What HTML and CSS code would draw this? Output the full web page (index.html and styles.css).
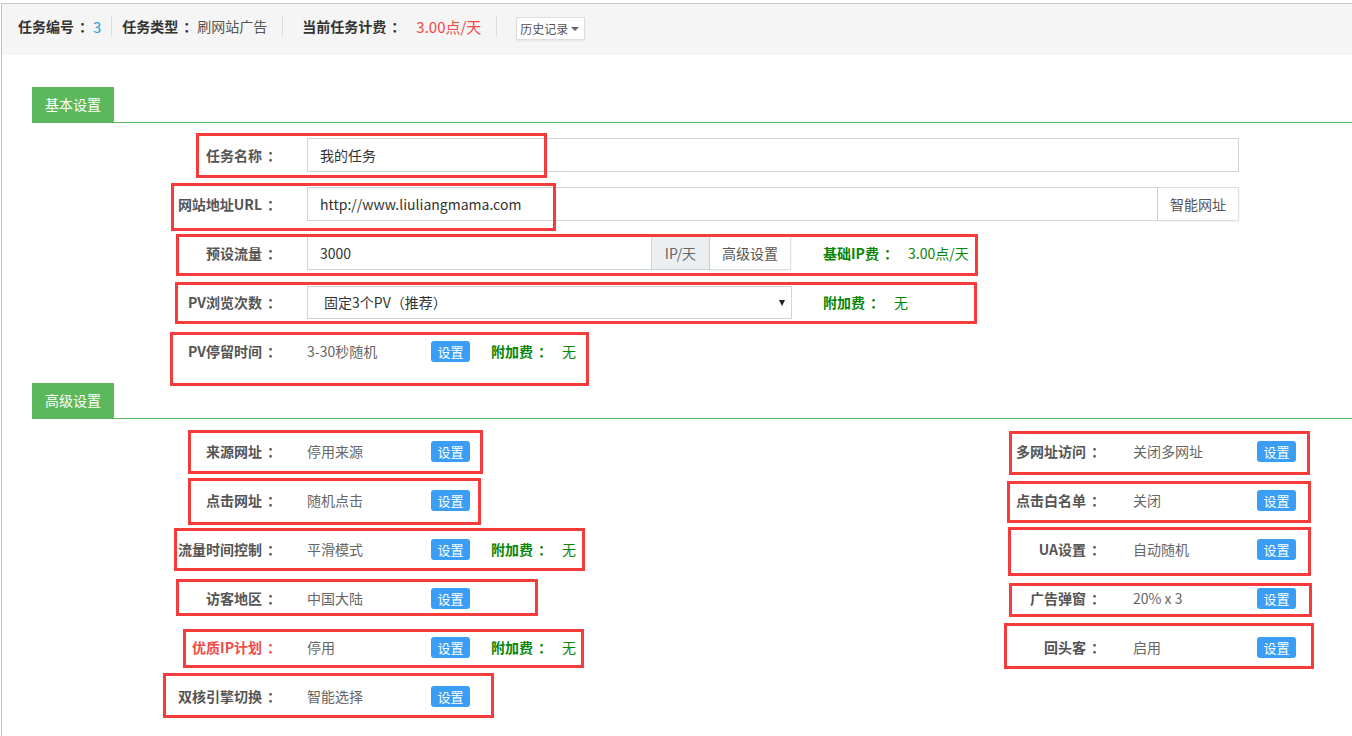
FILE: index.html
```html
<!DOCTYPE html>
<html lang="zh-CN">
<head>
<meta charset="utf-8">
<title>任务设置</title>
<link rel="stylesheet" href="styles.css">
</head>
<body>
<div class="page">
  <div class="topbar">
    <span class="tb-label">任务编号<span class="colon">：</span></span><span class="tb-id">3</span>
    <span class="tb-sep sep1"></span>
    <span class="tb-label">任务类型<span class="colon">：</span></span><span class="tb-text">刷网站广告</span>
    <span class="tb-sep sep2"></span>
    <span class="tb-label">当前任务计费<span class="colon">：</span></span><span class="tb-fee">3.00点/天</span>
    <span class="tb-sep sep3"></span>
    <span class="tb-history">历史记录<span class="caret"></span></span>
  </div>

  <div class="content">
    <div class="section-head"><span class="section-tab">基本设置</span></div>

    <div class="row">
      <div class="label">任务名称<span class="colon">：</span></div>
      <div class="field">
        <div class="input w-name">我的任务</div>
      </div>
    </div>

    <div class="row">
      <div class="label">网站地址URL<span class="colon">：</span></div>
      <div class="field">
        <div class="input w-url">http://www.liuliangmama.com</div>
        <div class="addon-btn">智能网址</div>
      </div>
    </div>

    <div class="row">
      <div class="label">预设流量<span class="colon">：</span></div>
      <div class="field">
        <div class="input w-flow">3000</div>
        <div class="addon-gray">IP/天</div>
        <div class="addon-btn">高级设置</div>
        <div class="extra extra-wide"><span class="extra-label">基础IP费<span class="colon">：</span></span><span class="extra-val">3.00点/天</span></div>
      </div>
    </div>

    <div class="row">
      <div class="label">PV浏览次数<span class="colon">：</span></div>
      <div class="field">
        <div class="select">固定3个PV（推荐）<span class="select-arrow"></span></div>
        <div class="extra extra-sel"><span class="extra-label">附加费<span class="colon">：</span></span><span class="extra-val">无</span></div>
      </div>
    </div>

    <div class="row">
      <div class="label">PV停留时间<span class="colon">：</span></div>
      <div class="field">
        <div class="value">3-30秒随机</div>
        <div class="btn-set">设置</div>
        <div class="extra"><span class="extra-label">附加费<span class="colon">：</span></span><span class="extra-val">无</span></div>
      </div>
    </div>

    <div class="section-head"><span class="section-tab">高级设置</span></div>

    <div class="adv">
      <div class="adv-left">
        <div class="row">
          <div class="label">来源网址<span class="colon">：</span></div>
          <div class="field"><div class="value">停用来源</div><div class="btn-set">设置</div></div>
        </div>
        <div class="row">
          <div class="label">点击网址<span class="colon">：</span></div>
          <div class="field"><div class="value">随机点击</div><div class="btn-set">设置</div></div>
        </div>
        <div class="row">
          <div class="label">流量时间控制<span class="colon">：</span></div>
          <div class="field"><div class="value">平滑模式</div><div class="btn-set">设置</div>
            <div class="extra"><span class="extra-label">附加费<span class="colon">：</span></span><span class="extra-val">无</span></div></div>
        </div>
        <div class="row">
          <div class="label">访客地区<span class="colon">：</span></div>
          <div class="field"><div class="value">中国大陆</div><div class="btn-set">设置</div></div>
        </div>
        <div class="row">
          <div class="label label-red">优质IP计划<span class="colon">：</span></div>
          <div class="field"><div class="value">停用</div><div class="btn-set">设置</div>
            <div class="extra"><span class="extra-label">附加费<span class="colon">：</span></span><span class="extra-val">无</span></div></div>
        </div>
        <div class="row">
          <div class="label">双核引擎切换<span class="colon">：</span></div>
          <div class="field"><div class="value">智能选择</div><div class="btn-set">设置</div></div>
        </div>
      </div>
      <div class="adv-right">
        <div class="row">
          <div class="label label-r">多网址访问<span class="colon">：</span></div>
          <div class="field field-r"><div class="value">关闭多网址</div><div class="btn-set">设置</div></div>
        </div>
        <div class="row">
          <div class="label label-r">点击白名单<span class="colon">：</span></div>
          <div class="field field-r"><div class="value">关闭</div><div class="btn-set">设置</div></div>
        </div>
        <div class="row">
          <div class="label label-r">UA设置<span class="colon">：</span></div>
          <div class="field field-r"><div class="value">自动随机</div><div class="btn-set">设置</div></div>
        </div>
        <div class="row">
          <div class="label label-r">广告弹窗<span class="colon">：</span></div>
          <div class="field field-r"><div class="value">20% x 3</div><div class="btn-set">设置</div></div>
        </div>
        <div class="row">
          <div class="label label-r">回头客<span class="colon">：</span></div>
          <div class="field field-r"><div class="value">启用</div><div class="btn-set">设置</div></div>
        </div>
      </div>
    </div>
  </div>
</div>

<div class="annot a1"></div>
<div class="annot a2"></div>
<div class="annot a3"></div>
<div class="annot a4"></div>
<div class="annot a5"></div>
<div class="annot a6"></div>
<div class="annot a7"></div>
<div class="annot a8"></div>
<div class="annot a9"></div>
<div class="annot a10"></div>
<div class="annot a11"></div>
<div class="annot a12"></div>
<div class="annot a13"></div>
<div class="annot a14"></div>
<div class="annot a15"></div>
<div class="annot a16"></div>
</body>
</html>
```

FILE: styles.css
```css
* { box-sizing: border-box; }
html, body { margin: 0; padding: 0; background: #fff; }
body {
  position: relative;
  height: 736px;
  overflow: hidden;
  font-family: "Noto Sans CJK SC", "Noto Sans", sans-serif;
  font-size: 14px;
  color: #333;
}

/* full-width colon sits centred in its cell in the reference */
.colon { padding-left: 5px; margin-right: -5px; }

.page {
  margin: 3px 0 0 1px;
  border-top: 1px solid #c8c8c8;
  border-left: 1px solid #c4c4c4;
  min-height: 733px;
}

/* ---------- top bar ---------- */
.topbar {
  height: 51px;
  background: #f5f5f5;
  display: flex;
  align-items: center;
  padding: 0 0 7px 16px;
  white-space: nowrap;
}
.tb-label { font-weight: bold; color: #333; }
.tb-id { color: #2a9fd6; margin-left: 5px; font-size: 15px; }
.tb-text { color: #555; margin-left: 5px; }
.tb-fee { color: #f04848; margin-left: 16px; font-size: 15px; }
.tb-sep { width: 1px; height: 20px; background: #dcdcdc; flex: none; }
.sep1 { margin: 0 10px 0 10px; }
.sep2 { margin: 0 19px 0 15px; }
.sep3 { margin: 0 19px 0 15px; }
.tb-history {
  height: 23px;
  margin-top: 5px;
  padding: 0 5px 0 3px;
  display: flex;
  align-items: center;
  gap: 3px;
  border: 1px solid #dedede;
  background: #fff;
  box-shadow: 0 1px 2px rgba(0, 0, 0, 0.08);
  font-size: 12px;
  color: #555;
}
.caret {
  width: 0; height: 0;
  border-top: 4px solid #666;
  border-left: 4px solid transparent;
  border-right: 4px solid transparent;
  margin-top: 1px;
}

/* ---------- content ---------- */
.content { padding: 32px 0 0 30px; }

.section-head {
  display: flex;
  border-bottom: 1px solid #5cb85c;
  margin-bottom: 15px;
}
.section-tab {
  width: 82px;
  height: 35px;
  line-height: 35px;
  text-align: center;
  background: #5cb85c;
  color: #fff;
  font-size: 14px;
}

.row {
  display: flex;
  align-items: center;
  height: 34px;
  margin-bottom: 15px;
  white-space: nowrap;
}
.label {
  flex: none;
  width: 244px;
  text-align: right;
  font-weight: bold;
  color: #555;
}
.label-red { color: #f24a4a; }
.field {
  display: flex;
  align-items: center;
  height: 100%;
  margin-left: 31px;
}

.input {
  height: 34px;
  border: 1px solid #ccd6d8;
  padding: 0 12px;
  display: flex;
  align-items: center;
  color: #333;
}
.w-name { width: 932px; }
.w-url { width: 851px; }
.w-flow { width: 345px; }

.addon-gray {
  width: 58px;
  height: 34px;
  display: flex;
  align-items: center;
  justify-content: center;
  background: #eceff1;
  border: 1px solid #ccd6d8;
  border-left: 0;
  color: #666;
}
.addon-btn {
  width: 81px;
  height: 34px;
  display: flex;
  align-items: center;
  justify-content: center;
  background: #fff;
  border: 1px solid #d9e0e2;
  border-left: 0;
  box-shadow: 0 1px 2px rgba(0, 0, 0, 0.07);
  color: #555;
}

.select {
  position: relative;
  width: 485px;
  height: 33px;
  border: 1px solid #ccd6d8;
  padding-left: 16px;
  display: flex;
  align-items: center;
  color: #333;
}
.select-arrow {
  position: absolute;
  right: 6px;
  top: 13px;
  width: 0; height: 0;
  border-top: 6px solid #222;
  border-left: 3.5px solid transparent;
  border-right: 3.5px solid transparent;
}

.value {
  width: 124px;
  color: #666;
}
.btn-set {
  flex: none;
  width: 39px;
  height: 21px;
  display: flex;
  align-items: center;
  justify-content: center;
  border-radius: 3px;
  background: #3a9ef5;
  color: #fff;
  font-size: 13px;
}

.extra { display: flex; align-items: center; margin-left: 21px; }
.extra-wide { margin-left: 32px; }
.extra-sel { margin-left: 31px; }
.extra-label { font-weight: bold; color: #078507; }
.extra-val { color: #078507; margin-left: 15px; }

/* ---------- advanced two columns ---------- */
.adv { display: flex; }
.adv-left { flex: 1; }
.adv-right { flex: none; width: 396px; }
.label-r { width: 144px; }
.field-r { margin-left: 33px; }

/* ---------- red annotation boxes ---------- */
.annot {
  position: absolute;
  border: 3px solid #f63b3b;
}
.a1  { left: 196px;  top: 133px; width: 351px; height: 45px; }
.a2  { left: 171px;  top: 183px; width: 385px; height: 48px; }
.a3  { left: 176px;  top: 234px; width: 802px; height: 42px; }
.a4  { left: 175px;  top: 282px; width: 802px; height: 42px; }
.a5  { left: 170px;  top: 332px; width: 419px; height: 54px; }
.a6  { left: 188px;  top: 430px; width: 295px; height: 44px; }
.a7  { left: 188px;  top: 478px; width: 293px; height: 47px; }
.a8  { left: 174px;  top: 528px; width: 411px; height: 43px; }
.a9  { left: 176px;  top: 579px; width: 362px; height: 37px; }
.a10 { left: 183px;  top: 629px; width: 401px; height: 39px; }
.a11 { left: 163px;  top: 673px; width: 331px; height: 45px; }
.a12 { left: 1009px; top: 431px; width: 301px; height: 44px; }
.a13 { left: 1007px; top: 481px; width: 304px; height: 42px; }
.a14 { left: 1008px; top: 527px; width: 303px; height: 49px; }
.a15 { left: 1009px; top: 583px; width: 303px; height: 34px; }
.a16 { left: 1004px; top: 623px; width: 310px; height: 46px; }
```
